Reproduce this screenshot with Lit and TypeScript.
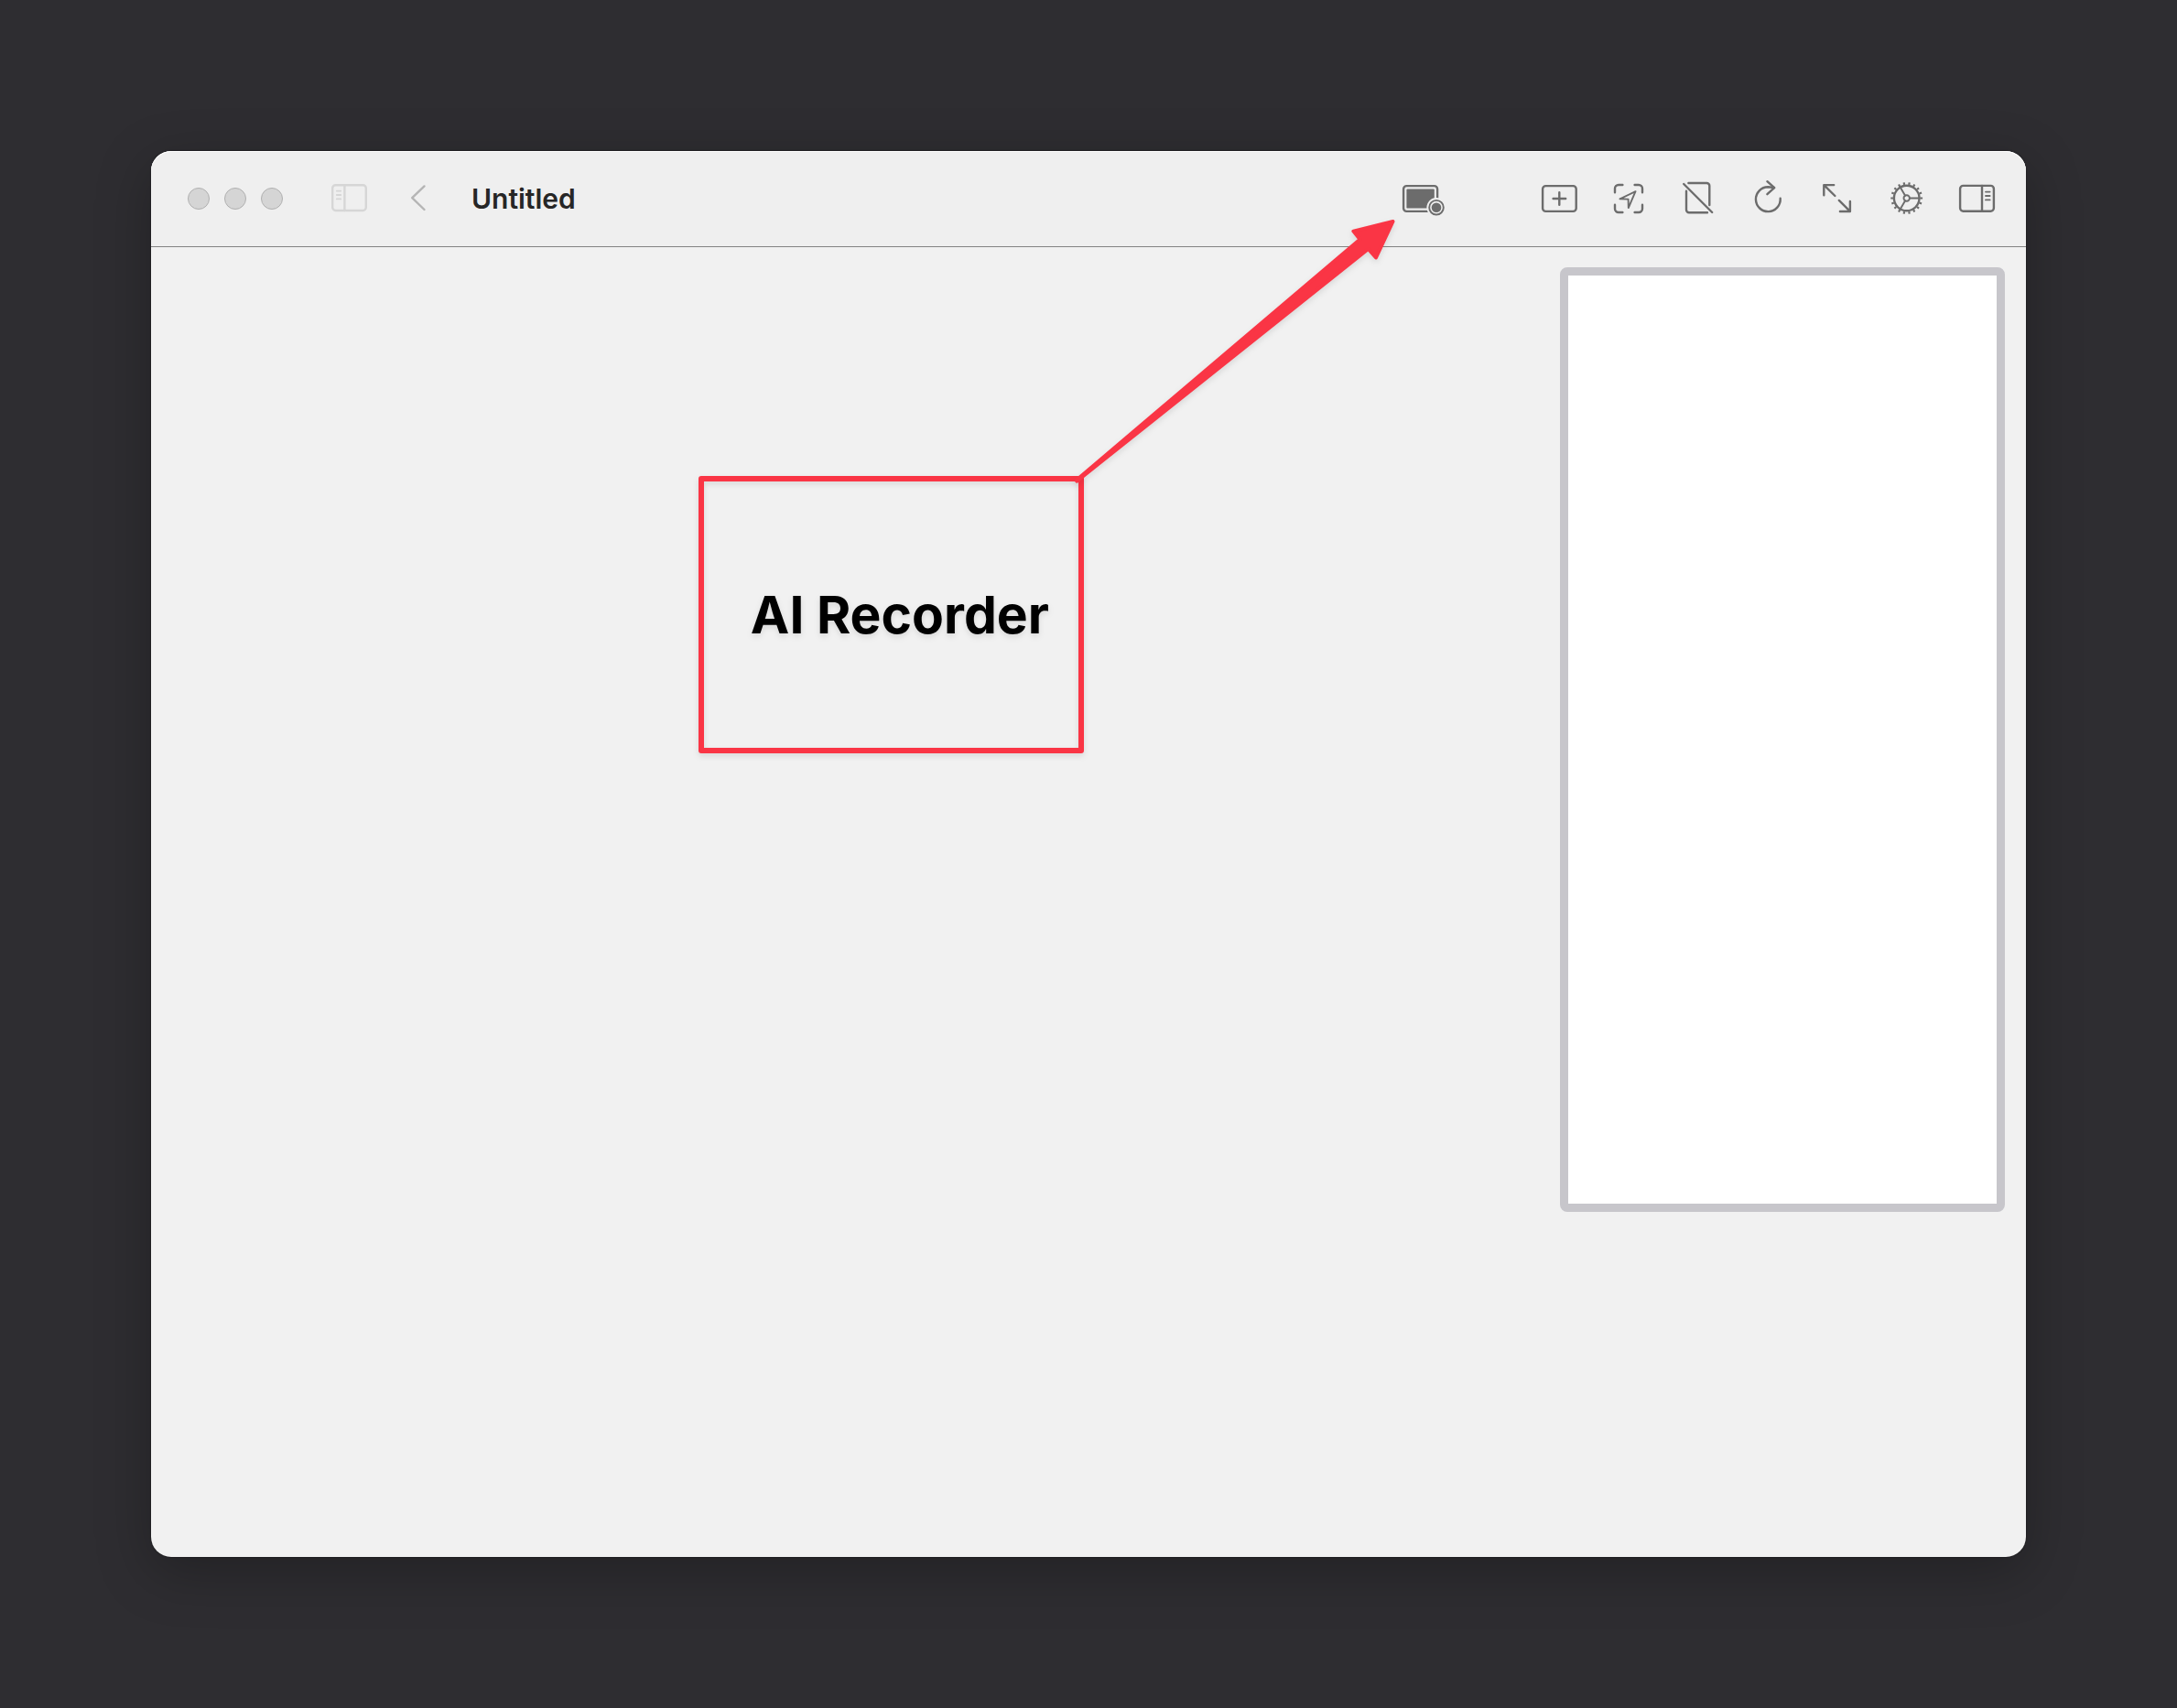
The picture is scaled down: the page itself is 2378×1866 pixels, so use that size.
import { LitElement, html, css, svg, type SVGTemplateResult } from "lit";
import { customElement } from "lit/decorators.js";

// Every toolbar glyph is drawn on a 44 x 44 grid.
const gearTeeth = Array.from({ length: 18 }, (_, i) => {
  const a = (i * Math.PI) / 9;
  const at = (r: number) =>
    `${(21.7 + r * Math.cos(a)).toFixed(2)} ${(21.5 + r * Math.sin(a)).toFixed(2)}`;
  return `M${at(14.8)}L${at(17.4)}`;
}).join("");

const icons: Record<string, SVGTemplateResult> = {
  sidebarLeft: svg`
    <rect x="4.2" y="7.2" width="36.6" height="27.8" rx="3.4"></rect>
    <path d="M17.4 7.2V35"></path>
    <path class="thin" d="M8.8 13.6h4.4M8.8 18h4.4M8.8 22.4h4.4"></path>`,
  back: svg`<path d="M28.5 8.4L15.2 21.2L28.5 34"></path>`,
  record: svg`
    <rect x="0.1" y="8.1" width="37" height="27.8" rx="3.4"></rect>
    <rect class="solid" x="3.4" y="11.4" width="30.4" height="21.2" rx="1.2"></rect>
    <circle class="halo" cx="36" cy="31.7" r="10.6"></circle>
    <circle class="thin" cx="36" cy="31.7" r="7.8"></circle>
    <circle class="solid" cx="36" cy="31.7" r="5.3"></circle>`,
  add: svg`
    <rect x="4.1" y="8.1" width="36.6" height="27.8" rx="3.4"></rect>
    <path d="M15.6 22h13.6M22.3 15.2v13.6"></path>`,
  locate: svg`
    <path d="M7 15.2V11a4 4 0 0 1 4-4h4.4M28.6 7H33a4 4 0 0 1 4 4v4.2M37 28.8V33a4 4 0 0 1-4 4h-4.4M15.4 37H11a4 4 0 0 1-4-4v-4.2"></path>
    <path class="thin" d="M29.5 14.2L12.5 22.3L21.6 22.6L21.8 32Z"></path>`,
  noDevice: svg`
    <path d="M11.4 5H31.3a3 3 0 0 1 3 3V29M9 13.8V34.3a3 3 0 0 0 3 3H32"></path>
    <path d="M6.2 6L37.2 37"></path>`,
  reload: svg`
    <path d="M35.7 21.8A13.4 13.4 0 1 1 22.3 9.3L29 10"></path>
    <path d="M21.4 3.2L29.2 10.2L21.4 17.2"></path>`,
  expand: svg`
    <path d="M18.2 7.1H7.3V18.2M7.6 7.4L19.4 19M24.9 36H35.9V24.9M35.6 35.7L23.8 23.9"></path>`,
  settings: svg`
    <circle cx="21.7" cy="21.5" r="13.8"></circle>
    <path class="tooth" d=${gearTeeth}></path>
    <circle class="thin" cx="21.7" cy="21.5" r="3.2"></circle>
    <path class="thin" d="M24.9 21.5H35.7M20.1 18.7L14.7 9.4M20.1 24.3L14.7 33.6"></path>`,
  sidebarRight: svg`
    <rect x="4.1" y="7.9" width="36.8" height="27.8" rx="3.4"></rect>
    <path d="M28 7.9V35.7"></path>
    <path class="thin" d="M32 14.6h4.6M32 19h4.6M32 23.4h4.6"></path>`,
};

@customElement("tool-button")
export class ToolButton extends LitElement {
  static properties = { icon: {}, label: {} };
  declare icon: string;
  declare label: string;

  static styles = css`
    :host {
      display: block;
      color: #6c6c6c;
    }
    button {
      display: block;
      width: 44px;
      height: 44px;
      padding: 0;
      border: 0;
      background: none;
      color: inherit;
    }
    svg {
      display: block;
      width: 44px;
      height: 44px;
      overflow: visible;
      fill: none;
      stroke: currentColor;
      stroke-width: 2.4;
      stroke-linecap: round;
      stroke-linejoin: round;
    }
    .thin {
      stroke-width: 1.9;
    }
    .tooth {
      stroke-width: 2.2;
      stroke-linecap: butt;
    }
    .solid {
      fill: currentColor;
      stroke: none;
    }
    .halo {
      fill: #efefef;
      stroke: none;
    }
  `;

  render() {
    return html`<button type="button" aria-label=${this.label}>
      <svg viewBox="0 0 44 44" aria-hidden="true">${icons[this.icon]}</svg>
    </button>`;
  }
}

@customElement("app-root")
export class AppRoot extends LitElement {
  static styles = css`
    :host {
      display: flex;
      box-sizing: border-box;
      min-height: 100vh;
      padding: 165px;
      background: #2e2d31;
      font-family: Inter, "Liberation Sans", sans-serif;
    }
    .window {
      position: relative;
      flex: 1;
      display: flex;
      flex-direction: column;
      border-radius: 22px;
      background: #f1f1f1;
      box-shadow: 0 16px 60px rgba(0, 0, 0, 0.26), 0 0 2px rgba(0, 0, 0, 0.6);
    }
    .bar {
      display: flex;
      align-items: center;
      height: 104px;
      padding: 0 32px 0 40px;
      border-bottom: 1px solid #828282;
      border-radius: 22px 22px 0 0;
      background: #efefef;
      box-shadow: inset 0 1px #ffffff;
    }
    .lights {
      display: flex;
      gap: 16px;
      margin-right: 50px;
    }
    .light {
      box-sizing: border-box;
      width: 24px;
      height: 24px;
      padding: 0;
      border: 1px solid #b0b0b0;
      border-radius: 50%;
      background: #d5d5d5;
    }
    .tools {
      display: flex;
      gap: 32px;
    }
    .disabled {
      color: #d6d6d6;
    }
    .back {
      color: #b5b5b5;
    }
    .title {
      flex: 1;
      margin: 0 0 0 36px;
      color: #262626;
      font-size: 30px;
      font-weight: 600;
      line-height: 40px;
    }
    .record {
      margin-right: 104px;
    }
    .content {
      flex: 1;
      display: flex;
      justify-content: flex-end;
      align-items: flex-start;
      padding: 22px 23px;
    }
    .preview {
      box-sizing: border-box;
      width: 486px;
      height: 1032px;
      border: 9px solid #c7c6cb;
      border-radius: 8px;
      background: #ffffff;
    }
    .callout {
      position: absolute;
      left: 598px;
      top: 355px;
      box-sizing: border-box;
      display: flex;
      align-items: center;
      justify-content: flex-end;
      width: 421px;
      height: 303px;
      padding-right: 32px;
      border: 6px solid #fa3545;
      border-radius: 3px;
      filter: drop-shadow(0 3px 3px rgba(0, 0, 0, 0.1));
      color: #000000;
      font-size: 57px;
      font-weight: 700;
      line-height: 72px;
      white-space: nowrap;
    }
    .arrow {
      position: absolute;
      left: 1000px;
      top: 60px;
      width: 370px;
      height: 320px;
      fill: #fa3545;
      stroke: #fa3545;
      stroke-width: 4;
      stroke-linejoin: round;
      filter: drop-shadow(0 3px 3px rgba(0, 0, 0, 0.1));
      pointer-events: none;
    }
  `;

  render() {
    return html`
      <main class="window">
        <header class="bar">
          <div class="lights">
            <button class="light" type="button" aria-label="Close"></button>
            <button class="light" type="button" aria-label="Minimize"></button>
            <button class="light" type="button" aria-label="Zoom"></button>
          </div>
          <nav class="tools">
            <tool-button class="disabled" icon="sidebarLeft" label="Toggle sidebar"></tool-button>
            <tool-button class="back" icon="back" label="Back"></tool-button>
          </nav>
          <h1 class="title">Untitled</h1>
          <tool-button class="record" icon="record" label="AI Recorder"></tool-button>
          <div class="tools">
            <tool-button icon="add" label="Add screen"></tool-button>
            <tool-button icon="locate" label="Locate element"></tool-button>
            <tool-button icon="noDevice" label="Disconnect device"></tool-button>
            <tool-button icon="reload" label="Reload"></tool-button>
            <tool-button icon="expand" label="Expand"></tool-button>
            <tool-button icon="settings" label="Settings"></tool-button>
            <tool-button icon="sidebarRight" label="Toggle inspector"></tool-button>
          </div>
        </header>
        <div class="content">
          <section class="preview" aria-label="Device preview"></section>
        </div>
        <div class="callout">AI Recorder</div>
        <svg class="arrow" viewBox="0 0 370 320" aria-hidden="true">
          <path d="M11.2 300.6L10.6 299.8L320.6 36.6L313.4 27.6L356.5 17L338 56.4L329.6 47Z"></path>
        </svg>
      </main>
    `;
  }
}
